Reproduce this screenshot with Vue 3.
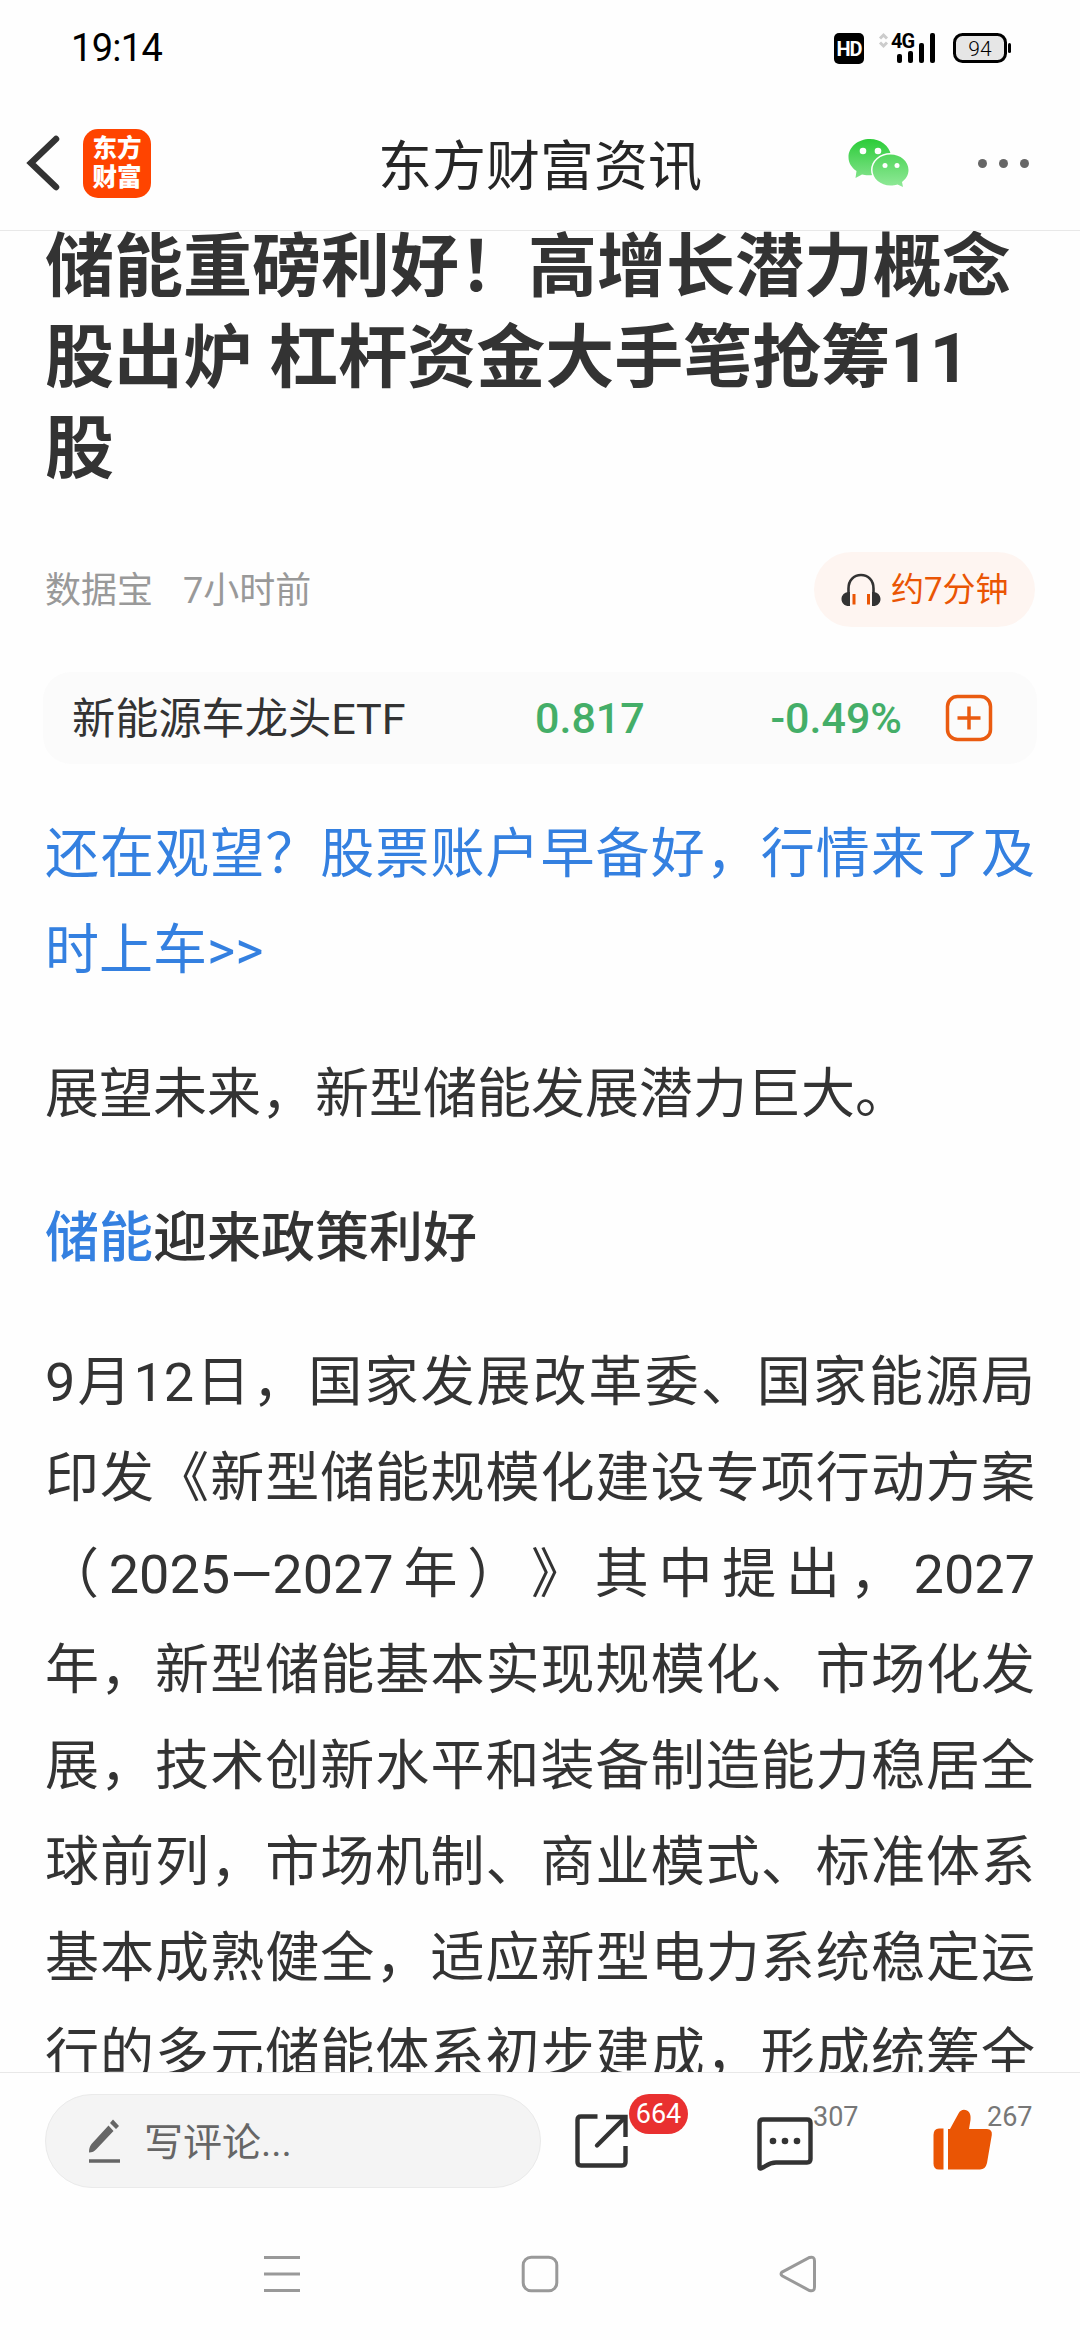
<script setup>
import { ref } from 'vue';

const title = '储能重磅利好！高增长潜力概念股出炉 杠杆资金大手笔抢筹11股';
const stock = { name: '新能源车龙头ETF', price: '0.817', change: '-0.49%' };

const shareCount = ref(664);
const commentCount = ref(307);
const likeCount = ref(267);

const like = () => {
  likeCount.value++;
};
</script>

<template>
  <div class="page">
    <div class="status-bar">
      <span class="clock">19:14</span>
      <div class="status-icons">
        <span class="hd">HD</span>
        <svg class="signal" width="58" height="32" viewBox="0 0 58 32">
          <path d="M2 6.5 L5.5 3 L9 6.5 M2 10.5 L5.5 14 L9 10.5" fill="none" stroke="#ccc" stroke-width="3" />
          <text x="13" y="16" class="net">4G</text>
          <rect x="19" y="22" width="5" height="9" rx="2" />
          <rect x="30" y="19" width="5" height="12" rx="2" />
          <rect x="41" y="11" width="5" height="20" rx="2" />
          <rect x="52" y="1" width="5" height="30" rx="2" />
        </svg>
        <svg class="battery" width="60" height="32" viewBox="0 0 60 32">
          <rect x="2.5" y="2.5" width="51" height="27" rx="8" fill="#e6e6e6" stroke="#000" stroke-width="3" />
          <rect x="56" y="11" width="3" height="10" rx="1.5" />
          <text x="28" y="23.5" text-anchor="middle" class="level">94</text>
        </svg>
      </div>
    </div>

    <div class="header">
      <svg class="back" width="36" height="60" viewBox="0 0 36 60">
        <path d="M30 6 L5 30 L30 54" fill="none" stroke="#333" stroke-width="6.5" stroke-linecap="round" />
      </svg>
      <div class="logo"><span>东方</span><span>财富</span></div>
      <h2 class="header-title">东方财富资讯</h2>
      <svg class="wechat" width="62" height="50" viewBox="0 0 62 50">
        <defs>
          <linearGradient id="wx1" x1="0" y1="0" x2="0" y2="1">
            <stop offset="0" stop-color="#2bcc38" />
            <stop offset="1" stop-color="#7fe288" />
          </linearGradient>
          <linearGradient id="wx2" x1="0" y1="0" x2="0" y2="1">
            <stop offset="0" stop-color="#52d65c" />
            <stop offset="1" stop-color="#90e998" />
          </linearGradient>
        </defs>
        <path d="M22 1 C10 1 0.500 9 0.500 19 C0.500 25 3.500 29.500 8.500 33 L7.500 40 L14 36.500 C17 37.300 20 37.500 25 37 L43 17 C41 7.500 32.500 1 22 1 Z" fill="url(#wx1)" />
        <ellipse cx="42.500" cy="32" rx="19.500" ry="17" fill="#fff" />
        <path d="M42.500 16.500 C52.500 16.500 60.500 23.300 60.500 32 C60.500 37 58 41 54 44 L55 49 L49.500 46.500 C47 47.300 45 47.500 42.500 47.500 C32.500 47.500 24.500 40.500 24.500 32 C24.500 23.300 32.500 16.500 42.500 16.500 Z" fill="url(#wx2)" />
        <g fill="#fff">
          <circle cx="15" cy="13" r="3.300" />
          <circle cx="30" cy="13" r="3.300" />
          <circle cx="37" cy="27.500" r="2.500" />
          <circle cx="49" cy="27.500" r="2.500" />
        </g>
      </svg>
      <div class="more"><i></i><i></i><i></i></div>
    </div>

    <div class="article">
      <h1 class="title">{{ title }}</h1>

      <div class="meta">
        <span class="source">数据宝</span>
        <span class="time">7小时前</span>
        <div class="listen">
          <svg width="40" height="34" viewBox="0 0 40 34">
            <path d="M7.500 20 V15.500 C7.500 7 13 2 20 2 C27 2 32.500 7 32.500 15.500 V20" fill="none" stroke="#333" stroke-width="2.600" />
            <path d="M9 19 C4 18.500 0.500 22 0.500 26 C0.500 30.500 4 33.500 9 33 Z M31 19 C36 18.500 39.500 22 39.500 26 C39.500 30.500 36 33.500 31 33 Z" fill="#333" />
            <path d="M13 21 V31.500 M27.500 21 V31.500" stroke="#ea5504" stroke-width="3" />
          </svg>
          <span class="duration">约7分钟</span>
        </div>
      </div>

      <div class="stock">
        <span class="stock-name">{{ stock.name }}</span>
        <span class="stock-price">{{ stock.price }}</span>
        <span class="stock-change">{{ stock.change }}</span>
        <svg class="add" width="48" height="48" viewBox="0 0 48 48">
          <rect x="2.500" y="2.500" width="43" height="43" rx="10" />
          <path d="M24 12.500 V35.500 M12.500 24 H35.500" />
        </svg>
      </div>

      <div class="content">
        <p><a class="link">还在观望？股票账户早备好，行情来了及时上车&gt;&gt;</a></p>
        <p>展望未来，新型储能发展潜力巨大。</p>
        <p class="bold"><a class="link">储能</a>迎来政策利好</p>
        <p class="cut">9月12日，国家发展改革委、国家能源局印发《新型储能规模化建设专项行动方案（2025—2027年）》其中提出，2027年，新型储能基本实现规模化、市场化发展，技术创新水平和装备制造能力稳居全球前列，市场机制、商业模式、标准体系基本成熟健全，适应新型电力系统稳定运行的多元储能体系初步建成，形成统筹全</p>
      </div>
    </div>

    <div class="toolbar">
      <div class="comment-input">
        <svg width="34" height="46" viewBox="0 0 34 46">
          <path d="M1 34.500 C1 31 1.500 28.500 3.500 26 L20.500 7.500 L25.500 13 L8.500 31 C6.500 33.500 4 34.500 1 34.500 Z M22 5 L25 1.500 L31 8 L28 11 Z" fill="#666" />
          <path d="M1 43 H32" stroke="#666" stroke-width="3.500" />
        </svg>
        <span class="placeholder">写评论...</span>
      </div>
      <div class="tool share">
        <svg width="54" height="54" viewBox="0 0 54 54">
          <path d="M22.500 2.500 H6 Q2.500 2.500 2.500 6 V48 Q2.500 51.500 6 51.500 H47 Q50.500 51.500 50.500 48 V32" />
          <path d="M31 3 H50.500 V23" />
          <path d="M49 4.500 L22 31.500" stroke-linecap="round" />
        </svg>
        <span class="badge">{{ shareCount }}</span>
      </div>
      <div class="tool comments">
        <svg width="56" height="54" viewBox="0 0 56 54">
          <path d="M6 2.500 H50 Q53.500 2.500 53.500 6 V42 Q53.500 45.500 50 45.500 H19 C11 45.500 8 50.500 3.500 51.500 Q2.500 51.500 2.500 50 V6 Q2.500 2.500 6 2.500 Z" stroke-linejoin="round" />
          <g class="dots">
            <circle cx="16" cy="24" r="3.300" />
            <circle cx="28" cy="24" r="3.300" />
            <circle cx="40" cy="24" r="3.300" />
          </g>
        </svg>
        <span class="count">{{ commentCount }}</span>
      </div>
      <div class="tool likes" @click="like">
        <svg width="60" height="62" viewBox="0 0 60 62">
          <path class="solid" d="M10.500 60.500 H6 Q0.500 60.500 0.500 54.500 V26 Q0.500 19.500 6 19.500 H10.500 Z" />
          <path class="solid" d="M15 60.500 V20 H17 L25.500 4.500 C27.500 0.500 31 0 34 1.500 C37 3 38 6.500 37.500 11 L36 20 H54 Q59.500 20.500 58.800 26 L54 54 Q52.500 60.500 47 60.500 Z" />
        </svg>
        <span class="count">{{ likeCount }}</span>
      </div>
    </div>

    <div class="system-nav">
      <svg width="38" height="38" viewBox="0 0 38 38"><path d="M1 2.500 H37 M1 19 H37 M1 35.500 H37" /></svg>
      <svg width="38" height="38" viewBox="0 0 38 38"><rect x="2.200" y="2.200" width="33.600" height="33.600" rx="8" /></svg>
      <svg width="38" height="38" viewBox="0 0 38 38"><path d="M3.500 16.800 L30.500 2.500 Q35.500 1 35.500 6 V32 Q35.500 37 30.500 35.500 L3.500 21 Q0.500 19 3.500 16.800 Z" /></svg>
    </div>
  </div>
</template>

<style>
body {
  margin: 0;
  background: #fefefe;
}
</style>

<style scoped>
.page {
  display: flex;
  flex-direction: column;
  width: 1080px;
  height: 2340px;
  overflow: hidden;
  background: #fefefe;
  color: #333;
  font-family: Roboto, "Noto Sans CJK SC", sans-serif;
  text-spacing-trim: space-all;
}

svg {
  display: block;
  flex-shrink: 0;
  overflow: visible;
}

.status-bar {
  display: flex;
  justify-content: space-between;
  align-items: center;
  height: 96px;
  padding: 0 68px 0 71px;
  box-sizing: border-box;
  color: #000;
}

.clock {
  font-size: 38px;
  letter-spacing: -0.7px;
}

.status-icons {
  display: flex;
  align-items: center;
}

.hd {
  width: 30px;
  height: 31px;
  border-radius: 5px;
  background: #000;
  color: #fff;
  font-size: 20px;
  font-weight: bold;
  letter-spacing: -1px;
  line-height: 32px;
  text-align: center;
}

.signal {
  margin-left: 14px;
}

.net {
  font-size: 20px;
  font-weight: bold;
  letter-spacing: -1px;
}

.battery {
  margin-left: 16px;
}

.level {
  font-size: 21px;
  font-weight: 300;
}

.header {
  display: flex;
  align-items: center;
  height: 135px;
  padding: 0 51px 0 26px;
  box-sizing: border-box;
  border-bottom: 1px solid #e8e8e8;
}

.logo {
  display: flex;
  flex-direction: column;
  justify-content: center;
  width: 68px;
  height: 69px;
  margin-left: 21px;
  border-radius: 15px;
  background: #ff4400;
  color: #fff;
  font-size: 24.5px;
  font-weight: 900;
  line-height: 29px;
  text-align: center;
}

.header-title {
  margin: 10px 0 0;
  padding-left: 227px;
  color: #262626;
  font-size: 54px;
  font-weight: normal;
  line-height: 80px;
}

.wechat {
  margin-left: 146px;
}

.more {
  display: flex;
  gap: 12px;
  margin-left: auto;
}

.more i {
  width: 9px;
  height: 9px;
  border-radius: 50%;
  background: #666;
}

.article {
  flex: 1;
  min-height: 0;
  overflow: hidden;
  padding: 0 43px;
}

.title {
  margin: -9px 2px 0;
  font-size: 69px;
  font-weight: bold;
  line-height: 91px;
}

.meta {
  display: flex;
  align-items: center;
  height: 75px;
  margin: 57px 2px 0;
  color: #999;
  font-size: 36px;
}

.source,
.time,
.duration,
.placeholder {
  padding-bottom: 5px;
}

.source {
  margin-right: 30px;
}

.listen {
  display: flex;
  align-items: center;
  gap: 10px;
  width: 221px;
  height: 75px;
  margin-left: auto;
  padding-left: 27px;
  box-sizing: border-box;
  border-radius: 38px;
  background: #fef5f1;
  color: #ea5504;
  font-size: 33px;
}

.stock {
  display: flex;
  align-items: center;
  height: 92px;
  margin-top: 45px;
  padding: 0 44px 0 29px;
  border-radius: 28px;
  background: #fbfbfb;
}

.stock-name {
  width: 463px;
  padding-bottom: 6px;
  font-size: 43.2px;
}

.stock-price,
.stock-change {
  color: #44ae68;
  font-size: 43px;
  font-weight: 500;
}

.stock-change {
  margin-left: auto;
  margin-right: 43px;
}

.add {
  fill: none;
  stroke: #ea5b10;
  stroke-width: 3.5;
}

.content {
  padding: 43px 2px 0;
}

.content p {
  margin: 0 0 48px;
  font-size: 54px;
  line-height: 96px;
  text-align: justify;
}

.content .bold {
  font-weight: 500;
}

/* the paragraph goes on below the toolbar */
.content .cut {
  text-align-last: justify;
}

.link {
  color: #3480e0;
}

.toolbar {
  display: flex;
  height: 136px;
  padding: 21px 0 0 45px;
  box-sizing: border-box;
  border-top: 1px solid #e8e8e8;
}

.comment-input {
  display: flex;
  align-items: center;
  gap: 22px;
  width: 496px;
  height: 94px;
  padding-left: 42px;
  box-sizing: border-box;
  border: 1px solid #eaeaea;
  border-radius: 47px;
  background: #f4f4f4;
  color: #666;
  font-size: 39px;
}

.tool {
  display: flex;
  align-items: flex-start;
}

.tool svg {
  fill: none;
  stroke: #333;
  stroke-width: 4.4;
}

.tool .dots {
  fill: #333;
  stroke: none;
}

.tool .solid {
  fill: #ea5504;
  stroke: none;
}

.share {
  width: 182px;
  padding-left: 34px;
  box-sizing: border-box;
}

.share svg {
  margin-top: 20px;
}

.badge {
  width: 59px;
  height: 40px;
  border-radius: 20px;
  background: #e93030;
  color: #fff;
  font-size: 27px;
  line-height: 40px;
  text-align: center;
}

.comments {
  width: 176px;
  padding-left: 34px;
  box-sizing: border-box;
}

.comments svg {
  margin-top: 23px;
}

.count {
  margin-top: 7px;
  color: #777;
  font-size: 27px;
  line-height: 32px;
}

.likes {
  padding-left: 34px;
}

.likes svg {
  margin-top: 15px;
}

.likes .count {
  margin-left: -6px;
}

.system-nav {
  display: flex;
  justify-content: center;
  align-items: center;
  gap: 220px;
  height: 132px;
}

.system-nav svg {
  fill: none;
  stroke: #999;
  stroke-width: 3;
}
</style>
